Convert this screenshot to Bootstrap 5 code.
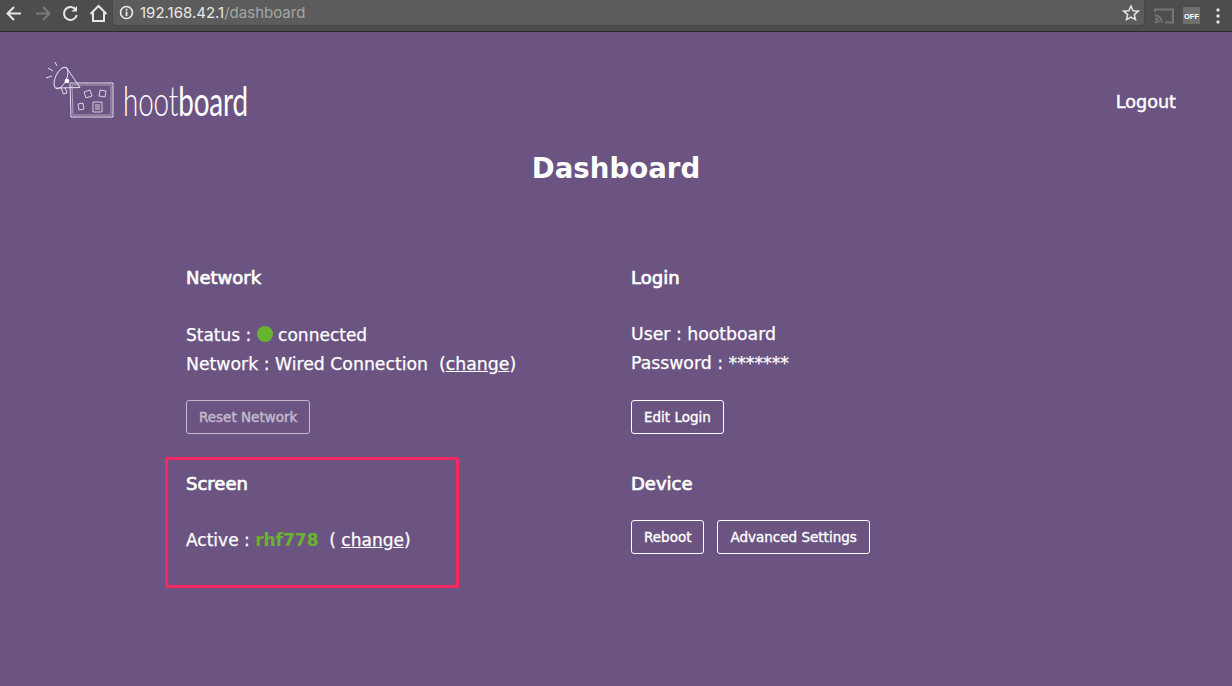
<!DOCTYPE html>
<html lang="en"><head><meta charset="utf-8"><title>Dashboard</title>
<link rel="stylesheet" href="https://cdn.jsdelivr.net/npm/bootstrap@5.3.0/dist/css/bootstrap.min.css">
<style>
html,body{height:100%;}
body{background:#6b5482;color:#fff;font-family:"DejaVu Sans","Liberation Sans",sans-serif;overflow:hidden;position:relative;}
.chrome-bar{height:32px;background:#4d4d4d;border-bottom:1px solid #2b2b2b;}
.nav-ico{width:21px;height:21px;flex:none;margin-top:-5px;}
.nav-ico + .nav-ico{margin-left:7px;}
.url-box{background:#5c5c5c;height:26px;width:1033px;margin-top:-5px;margin-left:3px;border-radius:0 0 4px 4px;border:1px solid #474747;border-top:0;font:15px/24px Inter,"Liberation Sans",sans-serif;color:#e8e8e8;padding-left:6px;}
.url-dim{color:#a5a5a5;}
.info-ico{margin-right:6px;flex:none;}
.top-row{height:108px;padding:27px 56px 0 43px;}
.logo-word{font:300 41px/1 Lato,sans-serif;transform:scaleX(.68);transform-origin:left center;display:inline-block;margin-left:2px;margin-top:21px;letter-spacing:-.2px;white-space:nowrap;}
.logo-word b{font-weight:400;}
.logout-link{font-size:17.6px;font-weight:400;-webkit-text-stroke:.45px #fff;color:#fff;text-decoration:none;margin-top:30px;display:block;}
.page-title{font-size:27.6px;font-weight:700;text-align:center;margin:0;line-height:58px;}
.panel-grid{display:grid;grid-template-columns:445px 445px;margin:0 0 0 186px;padding-top:67px;}
.panel{height:206px;}
.panel-head{font-size:18px;font-weight:400;-webkit-text-stroke:.7px #fff;line-height:26px;margin:0 0 29px;}
.head-wide{margin-bottom:30px;}
.head-tight{margin-bottom:23px;}
.info-line{font-size:17.3px;line-height:29px;white-space:pre;-webkit-text-stroke:.25px #fff;}
.info-tight{font-size:17px;}
.info-line a{color:#fff;}
.dot-ok{display:inline-block;width:16px;height:16px;border-radius:50%;background:#69b42f;vertical-align:-1px;}
.green-name{color:#69b42f;font-weight:700;-webkit-text-stroke:0;}
.ghost-btn{background:transparent;border:1px solid #fff;border-radius:3px;color:#fff;font-size:13.5px;font-weight:400;-webkit-text-stroke:.35px #fff;line-height:20px;padding:6px 12px;}
.ghost-btn.is-off{opacity:.6;}
.btn-row{margin-top:21px;}
.btn-row-low{margin-top:22px;}
.device-btns{gap:13px;}
.mark-box{position:absolute;left:165px;top:457px;width:294px;height:131px;border:3px solid #f8275f;border-radius:2px;}
</style></head><body>
<div class="chrome-bar d-flex align-items-center ps-1">
<svg class="nav-ico" viewBox="0 0 21 21" fill="none" stroke="#e6e6e6" stroke-width="2"><path d="M17 10.500H4M10 4l-6.500 6.500L10 17"/></svg>
<svg class="nav-ico" viewBox="0 0 21 21" fill="none" stroke="#7a7a7a" stroke-width="2"><path d="M4 10.500h13M11 4l6.500 6.500L11 17"/></svg>
<svg class="nav-ico" viewBox="0 0 21 21" fill="none" stroke="#e6e6e6" stroke-width="2"><path d="M16 7a6.500 6.500 0 1 0 .8 5"/><path d="M17 3v5.500h-5.500z" fill="#e6e6e6" stroke="none"/></svg>
<svg class="nav-ico" viewBox="0 0 21 21" fill="none" stroke="#e6e6e6" stroke-width="2"><path d="M2.500 11 10.500 3l8 8M5 9.500V18h11V9.500"/></svg>
<div class="url-box d-flex align-items-center">
<svg class="info-ico" width="15" height="15" viewBox="0 0 15 15"><circle cx="7.500" cy="7.500" r="6" fill="none" stroke="#eee" stroke-width="1.600"/><rect x="6.700" y="6.500" width="1.700" height="4.500" fill="#eee"/><rect x="6.700" y="3.800" width="1.700" height="1.700" fill="#eee"/></svg>
<span>192.168.42.1<span class="url-dim">/dashboard</span></span>
<svg class="ms-auto me-1" width="18" height="18" viewBox="0 0 18 18" fill="none" stroke="#e6e6e6" stroke-width="1.500"><path d="M9 2l2.100 4.700 5.100.5-3.900 3.400 1.200 5L9 13l-4.500 2.600 1.200-5L1.800 7.200l5.100-.5z"/></svg>
</div>
<svg class="ms-2" width="22" height="18" viewBox="0 0 22 18" fill="none" stroke="#767676" stroke-width="2"><path d="M2 5V2.500h18v13h-8M2 8a8 8 0 0 1 7 7.500M2 11.500a4 4 0 0 1 3.500 4"/><circle cx="3" cy="15" r="1.300" fill="#767676" stroke="none"/></svg>
<svg class="ms-2" width="17" height="17" viewBox="0 0 17 17"><rect width="17" height="17" fill="#6e6e6e"/><text x="8.500" y="11.500" font-size="7.500" font-weight="700" text-anchor="middle" fill="#fff" font-family="Liberation Sans">OFF</text></svg>
<svg class="ms-3" width="4" height="16" viewBox="0 0 4 16" fill="#e0e0e0"><circle cx="2" cy="2" r="1.700"/><circle cx="2" cy="8" r="1.700"/><circle cx="2" cy="14" r="1.700"/></svg>
</div>
<div class="top-row d-flex justify-content-between">
<div class="d-flex align-items-start">
<svg width="78" height="60" viewBox="0 0 78 60" fill="none" stroke="#f1edf4" stroke-width=".9">
<path d="M3 19l6-2M5 9l5 3M12 3l2 4"/>
<ellipse cx="18" cy="19" rx="5.500" ry="11.500" transform="rotate(25 18 19)"/>
<path d="M23 8l14 20.500M13 29l24-.5"/><circle cx="24" cy="22" r="2.300" fill="#fff" stroke="none"/>
<path d="M18 29l2.500 6 3.500-1-2-5.500"/>
<path d="M27 24h43v34H28z"/><path d="M29 26h39v30H30z" opacity=".55"/>
<path d="M41 33l6-2 2 6-6 2zM57 31l6 1-1 6-6-1zM35 45l5-1 1 6-5 1zM50 43h9v10h-9zM52 46h5M52 48h5M52 50h5" stroke-width=".8"/>
</svg>
<span class="logo-word">hoot<b>board</b></span>
</div>
<a class="logout-link" href="#">Logout</a>
</div>
<h1 class="page-title">Dashboard</h1>
<div class="panel-grid">
<section class="panel">
<h2 class="panel-head head-wide">Network</h2>
<div class="info-line info-tight">Status : <span class="dot-ok"></span> connected</div>
<div class="info-line">Network : Wired Connection  (<a href="#">change</a>)</div>
<div class="btn-row"><button class="btn ghost-btn is-off" type="button">Reset Network</button></div>
</section>
<section class="panel">
<h2 class="panel-head">Login</h2>
<div class="info-line">User : hootboard</div>
<div class="info-line">Password : *******</div>
<div class="btn-row-low"><button class="btn ghost-btn" type="button">Edit Login</button></div>
</section>
<section class="panel">
<h2 class="panel-head">Screen</h2>
<div class="info-line info-tight">Active : <span class="green-name">rhf778</span>  ( <a href="#">change</a>)</div>
</section>
<section class="panel">
<h2 class="panel-head head-tight">Device</h2>
<div class="d-flex device-btns"><button class="btn ghost-btn" type="button">Reboot</button><button class="btn ghost-btn" type="button">Advanced Settings</button></div>
</section>
</div>
<div class="mark-box"></div>
<script src="https://cdn.jsdelivr.net/npm/bootstrap@5.3.0/dist/js/bootstrap.bundle.min.js"></script>
</body></html>
